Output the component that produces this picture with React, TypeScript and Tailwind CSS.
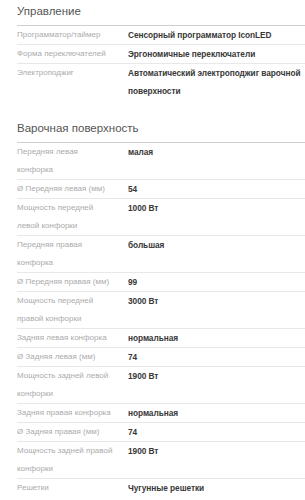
type Row = { label: string; value: string };

// line breaks follow the reference layout
const control: Row[] = [
  { label: 'Программатор/таймер', value: 'Сенсорный программатор IconLED' },
  { label: 'Форма переключателей', value: 'Эргономичные переключатели' },
  { label: 'Электроподжиг', value: 'Автоматический электроподжиг варочной\nповерхности' },
];

const hob: Row[] = [
  { label: 'Передняя левая\nконфорка', value: 'малая' },
  { label: 'Ø Передняя левая (мм)', value: '54' },
  { label: 'Мощность передней\nлевой конфорки', value: '1000 Вт' },
  { label: 'Передняя правая\nконфорка', value: 'большая' },
  { label: 'Ø Передняя правая (мм)', value: '99' },
  { label: 'Мощность передней\nправой конфорки', value: '3000 Вт' },
  { label: 'Задняя левая конфорка', value: 'нормальная' },
  { label: 'Ø Задняя левая (мм)', value: '74' },
  { label: 'Мощность задней левой\nконфорки', value: '1900 Вт' },
  { label: 'Задняя правая конфорка', value: 'нормальная' },
  { label: 'Ø Задняя правая (мм)', value: '74' },
  { label: 'Мощность задней правой\nконфорки', value: '1900 Вт' },
  { label: 'Решетки', value: 'Чугунные решетки' },
];

function Section({ title, rows, className = '' }: { title: string; rows: Row[]; className?: string }) {
  return (
    <section className={className}>
      <h2 className="pt-[3px] pb-[5px] text-[11.5px] leading-[17px] font-normal text-[#555] border-b border-[#cfcfcf]">
        {title}
      </h2>
      <div>
        {rows.map((row, i) => (
          <div
            key={row.label}
            className={`flex leading-[18px] ${i < rows.length - 1 ? 'border-b border-[#e8e8e8]' : ''}`}
          >
            <div className="w-[111px] shrink-0 pr-[4px] whitespace-pre-line text-[8px] text-[#ababab]">{row.label}</div>
            <div className="min-w-0 flex-1 whitespace-pre-line text-[8.3px] tracking-[-0.05px] font-bold text-[#383838]">
              {row.value}
            </div>
          </div>
        ))}
      </div>
    </section>
  );
}

export default function App() {
  return (
    <div className="min-h-[500px] bg-white pl-[17px] font-['Liberation_Sans',Arial,sans-serif]">
      <Section title="Управление" rows={control} />
      <Section title="Варочная поверхность" rows={hob} className="mt-[17px]" />
    </div>
  );
}
